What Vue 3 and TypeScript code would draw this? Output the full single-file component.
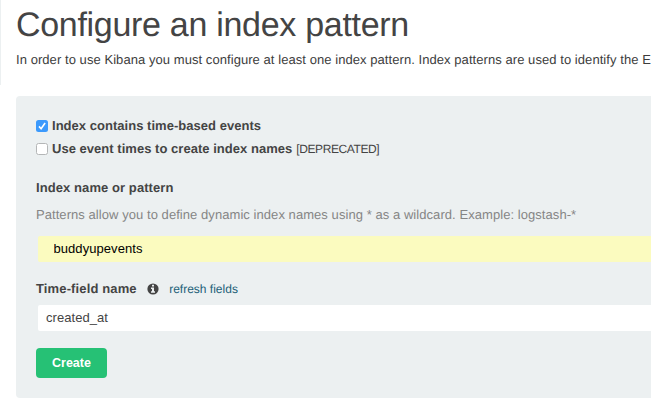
<script setup lang="ts">
import { ref } from 'vue'

const timeBased = ref(true)
const nameByEvents = ref(false)
const indexName = ref('buddyupevents')
const timeField = ref('created_at')
</script>

<template>
  <main class="page">
    <header class="intro">
      <h1>Configure an index pattern</h1>
      <p>In order to use Kibana you must configure at least one index pattern. Index patterns are used to identify the E</p>
    </header>
    <form class="card" @submit.prevent>
      <label class="check">
        <input v-model="timeBased" type="checkbox" />
        <svg class="box" viewBox="0 0 12 12">
          <rect v-if="timeBased" width="12" height="12" rx="2.5" fill="#3b99fc" />
          <rect v-else x=".5" y=".5" width="11" height="11" rx="2" fill="#fff" stroke="#b4b6b7" />
          <path v-if="timeBased" d="M3 6.4 5.1 8.8 9.1 3" fill="none" stroke="#fff" stroke-width="1.6" />
        </svg>
        <b>Index contains time-based events</b>
      </label>
      <label class="check">
        <input v-model="nameByEvents" type="checkbox" />
        <svg class="box" viewBox="0 0 12 12">
          <rect v-if="nameByEvents" width="12" height="12" rx="2.5" fill="#3b99fc" />
          <rect v-else x=".5" y=".5" width="11" height="11" rx="2" fill="#fff" stroke="#b4b6b7" />
          <path v-if="nameByEvents" d="M3 6.4 5.1 8.8 9.1 3" fill="none" stroke="#fff" stroke-width="1.6" />
        </svg>
        <b>Use event times to create index names</b>
        <small>[DEPRECATED]</small>
      </label>
      <label class="heading name-label" for="index-name">Index name or pattern</label>
      <p class="help">Patterns allow you to define dynamic index names using * as a wildcard. Example: logstash-*</p>
      <input id="index-name" v-model="indexName" class="field filled" type="text" />
      <div class="time-row">
        <label class="heading time-label" for="time-field">Time-field name</label>
        <svg class="info" viewBox="0 0 12 12">
          <circle cx="6" cy="6" r="5.6" fill="#444" />
          <path d="M5 1.8h2v1.6H5zM4 4.6h3v3.6h1v1.5H4V8.2h1V6H4z" fill="#ecf0f1" />
        </svg>
        <a class="refresh">refresh fields</a>
      </div>
      <input id="time-field" v-model="timeField" class="field" type="text" />
      <button class="create" type="submit">Create</button>
    </form>
  </main>
</template>

<style>
body {
  margin: 0;
  overflow: hidden;
  background: #fff;
}
</style>

<style scoped>
.page {
  width: 651px;
  height: 405px;
  overflow: hidden;
  font: 13px/20px "Liberation Sans", Arial, sans-serif;
  color: #444;
  text-rendering: geometricPrecision;
}
.intro {
  box-sizing: border-box;
  height: 85px;
  margin-bottom: 11px;
  padding: 5px 0 0 15px;
  border-left: 1px solid #ecf0f1;
  white-space: nowrap;
}
h1 {
  margin: 0;
  font-size: 34px;
  line-height: 40px;
  font-weight: 400;
  letter-spacing: -0.3px;
}
p {
  margin: 0;
}
.intro p {
  margin-top: 5px;
  color: #3c3c3c;
  letter-spacing: 0.062px;
}
.card {
  box-sizing: border-box;
  display: flex;
  flex-direction: column;
  align-items: flex-start;
  width: 700px;
  height: 302px;
  margin-left: 16px;
  padding: 20px;
  border-radius: 4px;
  background: #ecf0f1;
  white-space: nowrap;
}
.check {
  display: flex;
  align-items: center;
  height: 20px;
  margin-bottom: 3px;
  letter-spacing: 0.03px;
}
.check input {
  position: absolute;
  opacity: 0;
  pointer-events: none;
}
.box {
  width: 12px;
  height: 12px;
  margin-right: 4px;
}
small {
  margin-left: 4px;
  font-size: 12px;
  letter-spacing: -0.4px;
}
.heading {
  font-weight: 700;
}
.name-label {
  margin-top: 16px;
  letter-spacing: 0.08px;
}
.time-label {
  letter-spacing: 0.13px;
}
.help {
  margin-top: 7px;
  color: #858585;
  letter-spacing: 0.06px;
}
.field {
  box-sizing: border-box;
  width: 680px;
  height: 26px;
  margin: 0 0 0 2px;
  padding: 0 8px 2px;
  border: 0;
  border-radius: 2px;
  background: #fff;
  color: #444;
  font: inherit;
  letter-spacing: 0.06px;
  outline: 0;
}
.filled {
  margin-top: 11px;
  padding: 0 15.5px 2px;
  background: #fbfbbf;
  color: #000;
}
.time-row {
  display: flex;
  align-items: center;
  height: 20px;
  margin: 17px 0 6px;
}
.info {
  width: 12px;
  height: 12px;
  margin: 0 10px 0 10.5px;
}
.refresh {
  color: #1b6078;
  font-size: 12px;
}
.create {
  width: 71px;
  height: 30px;
  margin-top: 17px;
  padding: 0;
  border: 0;
  border-radius: 4px;
  background: #26c175;
  color: #fff;
  font: 700 12.5px/30px "Liberation Sans", Arial, sans-serif;
}
</style>
